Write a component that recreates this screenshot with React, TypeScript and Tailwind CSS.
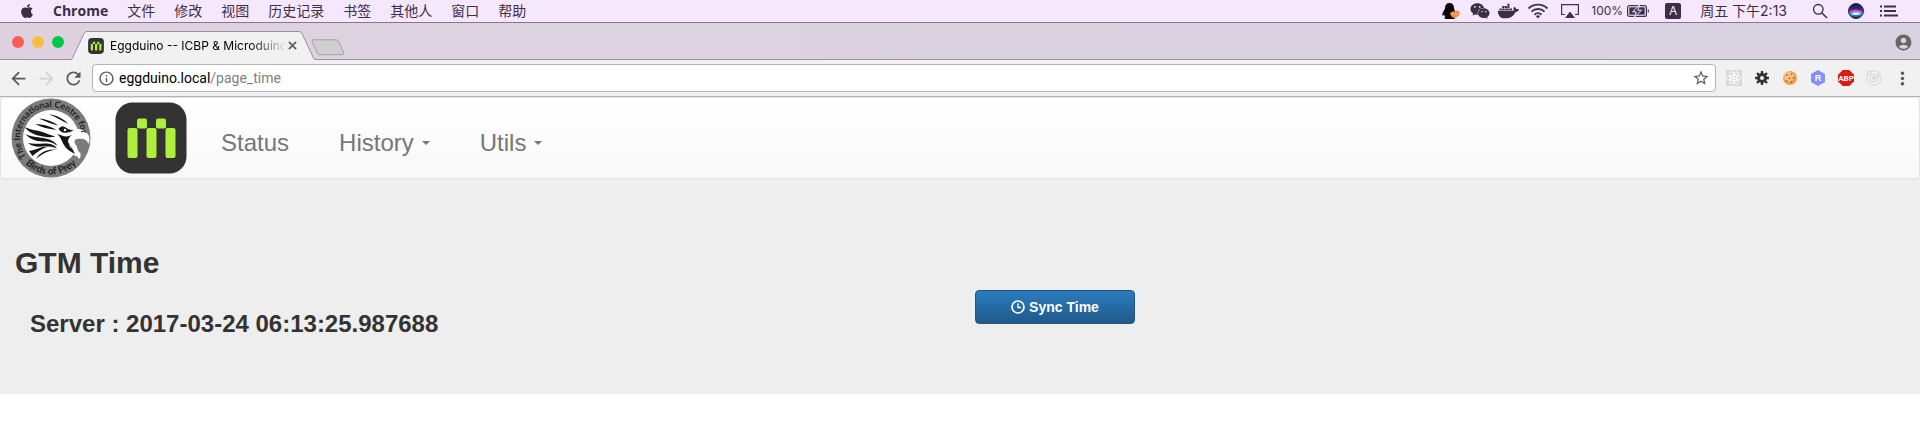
import React from "react";
import { FaApple, FaCog, FaDocker, FaWeixin } from "react-icons/fa";
import { MdArrowBack, MdArrowForward, MdRefresh, MdStarBorder, MdAccountCircle, MdMoreVert, MdInfoOutline } from "react-icons/md";

const MENUS = ["文件", "修改", "视图", "历史记录", "书签", "其他人", "窗口", "帮助"];

function Penguin() {
  return (
    <svg viewBox="0 0 18 18" className="h-[18px] w-[18px]" aria-hidden="true">
      <path d="M7.500 1C4.600 1 3 3 3 6c-.2 1.500-1.500 3-2.500 5.300-.4 1.300-.2 2.400.2 2.400.5 0 1-.7 1.300-1.100.2 1 .7 1.800 1.300 2.400C2.200 15.500 2 17 4 17h7.500c2 0 1.500-1.600.4-2.100 1-1 1.500-2.300 1.400-3.900C13.200 9 12.200 7.500 12 6c0-3-1.500-5-4.500-5z" fill="#0a0708" />
      <path d="M8.500 10.500c2-1.500 3.500-.5 5-1.200 2-.9 3.500-.3 4 .7.500 1.400-.2 3-1.500 4.300-2 2-5 1.900-6.500.2-1-1.100-1.700-3-1-4z" fill="#f28a3c" />
      <path d="M10 11.500c2 1.400 4.500 1 6.500-.8" stroke="#ffc380" strokeWidth="1" fill="none" />
    </svg>
  );
}

function Wifi() {
  return (
    <svg viewBox="0 0 22 16" className="h-4 w-[22px]" fill="none" stroke="#42324f" strokeWidth="1.900" aria-hidden="true">
      <path d="M1.500 5.500a13.500 13.500 0 0 1 19 0M4.500 8.700a9.200 9.200 0 0 1 13 0M7.500 11.700a5 5 0 0 1 7 0" />
      <path d="M11 15.500 8.900 13.300a3 3 0 0 1 4.200 0z" fill="#42324f" stroke="none" />
    </svg>
  );
}

function AirPlay() {
  return (
    <svg viewBox="0 0 18 14" className="h-3.5 w-[18px]" aria-hidden="true">
      <path d="M4 10.500H.6V.6h16.800v9.900H14" fill="none" stroke="#42324f" strokeWidth="1.200" />
      <path d="M9 7.500 14 14H4z" fill="#42324f" />
    </svg>
  );
}

function Battery() {
  return (
    <svg viewBox="0 0 23 12" className="h-3 w-[23px]" aria-hidden="true">
      <rect x=".6" y=".6" width="18.800" height="10.800" rx="2" fill="none" stroke="#42324f" strokeWidth="1.200" />
      <rect x="2.300" y="2.300" width="15.400" height="7.400" fill="#42324f" />
      <path d="M20.800 4v4c1.400-.3 1.700-3.500 0-4z" fill="#42324f" />
      <path d="M12.500 0 5.500 6.800h3.700L7.500 12l7-6.800h-3.700z" fill="#42324f" stroke="#f7e9fd" strokeWidth="1" />
    </svg>
  );
}

function Siri() {
  return (
    <svg viewBox="0 0 16 16" className="h-4 w-4" aria-hidden="true">
      <defs>
        <linearGradient id="siri" x1="0" y1="0" x2="0" y2="1">
          <stop offset="0" stopColor="#17152f" />
          <stop offset=".45" stopColor="#4a2a9a" />
          <stop offset=".7" stopColor="#3aa7f0" />
          <stop offset="1" stopColor="#151937" />
        </linearGradient>
      </defs>
      <circle cx="8" cy="8" r="7.500" fill="url(#siri)" stroke="#2a2547" />
      <path d="M1.500 8.500C5 6 10 6.500 14.500 8.500 11 9.500 7 10.500 1.500 8.500z" fill="#e04bd0" />
      <path d="M3 10.500c3-1.800 6-1.500 10-.8-2 2.300-6 3.500-10 .8z" fill="#c9f6ff" />
    </svg>
  );
}

function Microduino({ className }: { className: string }) {
  return (
    <svg viewBox="0 0 72 72" className={className} role="img" aria-label="Microduino">
      <rect x=".5" y=".5" width="71" height="71" rx="17" fill="#333" />
      <g fill="#aeef3c">
        <rect x="12.500" y="26" width="10" height="30" rx="2" />
        <rect x="31.500" y="26" width="10" height="30" rx="2" />
        <rect x="50.500" y="26" width="10" height="30" rx="2" />
        <rect x="22" y="16.500" width="10" height="10" rx="2" />
        <rect x="41" y="16.500" width="10" height="10" rx="2" />
      </g>
    </svg>
  );
}

function BirdsOfPrey() {
  return (
    <svg viewBox="0 0 80 80" className="h-20 w-20" role="img" aria-label="The International Centre for Birds of Prey">
      <defs>
        <path id="ringTop" d="M15.400 58.500A30.800 30.800 0 1 1 70.800 40" />
        <path id="ringBottom" d="M8 57.600A36.500 36.500 0 0 0 72 57.600" />
      </defs>
      <circle cx="40" cy="40" r="39.500" fill="#7b7b7b" />
      <circle cx="40" cy="40" r="28" fill="#fff" />
      <path d="M63 40h6c0 9-2 15-6 19l-6-8z" fill="#7b7b7b" />
      <path d="M57 28c3-.6 6 1 9 3 6-.8 10 3 12 7 .8 3 .5 6-.6 8-1-3-3-5-6-5-5-1-8 0-8 3 1 3 3 4 3 7 1 3 2 3 3 4 .5 3 0 5-1.500 6-1-3-4-4-7-4-4-1-7-5-9-9l-3-10z" fill="#fff" />
      <g fill="#151515">
        <path d="M38 16.500c8 .5 14 4 19.500 9.500-7-3.500-12-7-19.500-9.500z" />
        <path d="M28 20.500c7 .5 14 3 19 7-6-1.500-12-3.500-19-7z" />
        <path d="M24 26c8 0 15 2 22 6-7-1-14-2-22-6z" />
        <path d="M13.500 29c6 3 12 3 18 5 5 1.500 8 3.500 13 4.500-5 1.500-11 .5-15-.5-7-1.500-12-4-16-9z" />
        <path d="M14.500 36c7 3.500 14 3 20 4.500 6 1 10 3.500 12 7.500-5-4-9-4.500-15-4.500-7-.3-13-2.500-17-7.500z" />
        <path d="M17 45c7 1.500 13 0 19 .5 5 .3 8 2 10 5-5-2-9-2.500-14-2-6 .5-11 0-15-3.500z" />
        <path d="M18 53c7-1 12-5 20-4.500-8 2-12 6-16.500 9.500z" />
        <path d="M25 61c4-7 11-10 21-9.500-9 1-14 4-21 9.500z" />
        <path d="M47.500 30.500c3-3 6-2.500 8-.5 2 1.500 4 2 7 2-2 1.500-4 2.500-6 2.500-4 1-7 0-9-4z" />
        <path d="M46 36c4 1 7 3 10 2.500l5-1.500c-3 2-4 4-4 7 2 4 5 7 7 12-5-3-9-5-11-9-2-3-3-8-7-11z" />
      </g>
      <circle cx="54" cy="32" r="1.300" fill="#fff" />
      <path d="M58 45c1 2 3 3 4 6-3-1-4-3-4-6zM70 35.500c2 0 3 .5 4 1.500" fill="#ccc" />
      <g fill="#222" className="font-[Lato,sans-serif] font-bold">
        <text className="text-[9px]"><textPath href="#ringTop">The International Centre for</textPath></text>
        <text className="text-[10px]"><textPath href="#ringBottom" startOffset="50%" textAnchor="middle">Birds of Prey</textPath></text>
      </g>
    </svg>
  );
}

function MenuBar() {
  return (
    <header className="flex h-[23px] items-center justify-between border-b border-[#8a7396] bg-[#f6e8fc] pr-[22px] pl-[20px] font-[Inter,'Noto_Sans_CJK_SC',sans-serif] text-sm text-[#3c2e46]">
      <nav className="flex items-center gap-[19px]">
        <FaApple className="h-4 w-3.5" />
        <span className="font-['Open_Sans'] font-bold">Chrome</span>
        {MENUS.map((m) => <span key={m}>{m}</span>)}
      </nav>
      <div className="flex items-center">
        <Penguin />
        <FaWeixin className="ml-2.5 h-5 w-5" />
        <FaDocker className="ml-2 h-5 w-[21px]" />
        <span className="ml-2"><Wifi /></span>
        <span className="ml-3"><AirPlay /></span>
        <span className="ml-3 text-xs">100%</span>
        <span className="ml-1"><Battery /></span>
        <span className="ml-[15px] flex h-4 w-4 items-center justify-center rounded-xs bg-[#3c2e46] text-xs text-[#f6e8fc]">A</span>
        <span className="ml-[19px]">周五 下午2:13</span>
        <svg viewBox="0 0 16 16" className="ml-[25px] h-4 w-4" fill="none" stroke="currentColor" strokeWidth="1.300" aria-hidden="true">
          <circle cx="6.300" cy="6.300" r="4.800" />
          <path d="m10 10 5 5" strokeWidth="1.600" />
        </svg>
        <span className="ml-5"><Siri /></span>
        <svg viewBox="0 0 18 12" className="ml-4 h-3 w-[18px]" stroke="currentColor" strokeWidth="1.800" aria-hidden="true">
          <path d="M0 1.500h2M4 1.500h12M0 6h2M4 6h12M0 10.500h2M4 10.500h14" />
        </svg>
      </div>
    </header>
  );
}

function TabStrip() {
  return (
    <div className="flex h-[37px] items-end bg-linear-to-r from-[#dfd2e0] to-[#d8d3e1] shadow-[inset_0_-1px_#9b8fa3]">
      <div className="mb-3 ml-3 flex gap-2">
        <span className="h-3 w-3 rounded-full bg-[#fc5b57]" />
        <span className="h-3 w-3 rounded-full bg-[#fdbc40]" />
        <span className="h-3 w-3 rounded-full bg-[#02c84a]" />
      </div>
      <div className="relative ml-[7px] h-[29px] w-[244px]">
        <svg viewBox="0 0 244 29" className="absolute inset-0 h-full w-full" aria-hidden="true">
          <path d="M0 28.500 1 28 13 2.500Q14 .5 16 .5H228Q230 .5 231 2.500L243 28l1 .5V29H0z" fill="#f1f1f1" />
          <path d="M0 28.500 1 28 13 2.500Q14 .5 16 .5H228Q230 .5 231 2.500L243 28l1 .5" fill="none" stroke="#9b8fa3" />
        </svg>
        <div className="relative flex h-full items-center pl-[17px]">
          <Microduino className="h-4 w-4" />
          <span className="ml-1.5 w-[174px] overflow-hidden bg-linear-to-r from-black from-80% to-black/10 bg-clip-text font-[Inter] text-xs whitespace-nowrap text-transparent">Eggduino -- ICBP &amp; Microduino</span>
          <button aria-label="Close tab" className="ml-1 text-[#5a5a5a]">
            <svg viewBox="0 0 10 10" className="h-[9px] w-[9px]" stroke="currentColor" strokeWidth="1.800"><path d="m1 1 8 8M9 1 1 9" /></svg>
          </button>
        </div>
      </div>
      <button aria-label="New tab" className="-ml-1 mb-1">
        <svg viewBox="0 0 34 17" className="h-[17px] w-[34px]"><path d="M2 .8h23q2 0 2.800 1.700l4.800 11.500q.6 1.700-1.400 1.700H9q-2 0-2.800-1.700L1 2.500Q.5.800 2 .8z" fill="#cfcfcf" stroke="#a59eaa" /></svg>
      </button>
      <button aria-label="Profile" className="mr-[7px] mb-2 ml-auto text-[#666]"><MdAccountCircle className="h-[19px] w-[19px]" /></button>
    </div>
  );
}

function Toolbar() {
  return (
    <div className="flex h-[37px] items-center border-b border-[#b4b2b6] bg-[#f1f1f1] pr-[7px] pl-2 text-[#5a5a5a]">
      <button aria-label="Back"><MdArrowBack className="h-[21px] w-[21px]" /></button>
      <button aria-label="Forward" className="ml-[7px] text-[#d2d2d2]"><MdArrowForward className="h-[21px] w-[21px]" /></button>
      <button aria-label="Reload" className="ml-1.5"><MdRefresh className="h-[21px] w-[21px]" /></button>
      <div className="ml-2 flex h-7 flex-1 items-center rounded-sm border border-[#b4b4b8] bg-white pr-[5px] pl-[5px]">
        <MdInfoOutline className="h-[17px] w-[17px]" />
        <span className="ml-1 flex-1 font-[Roboto] text-sm text-[#808080]"><span className="text-black">eggduino.local</span>/page_time</span>
        <button aria-label="Bookmark"><MdStarBorder className="h-[18px] w-[18px]" /></button>
      </div>
      <div className="ml-2.5 flex items-center gap-3">
        <svg viewBox="0 0 16 16" className="h-4 w-4" fill="none" stroke="#fff" strokeWidth=".9" aria-hidden="true">
          <rect width="16" height="16" fill="#d8d8d8" stroke="none" />
          <ellipse cx="8" cy="8" rx="7" ry="2.700" />
          <ellipse cx="8" cy="8" rx="7" ry="2.700" transform="rotate(60 8 8)" />
          <ellipse cx="8" cy="8" rx="7" ry="2.700" transform="rotate(120 8 8)" />
          <circle cx="8" cy="8" r="1" fill="#fff" />
        </svg>
        <svg viewBox="0 0 16 16" className="h-4 w-4" aria-hidden="true">
          <g stroke="#333" strokeWidth="2.400"><path d="M8 1v14M1 8h14M3 3l10 10M13 3 3 13" /></g>
          <circle cx="8" cy="8" r="5" fill="#333" /><circle cx="8" cy="8" r="2" fill="#f1f1f1" />
        </svg>
        <svg viewBox="0 0 16 16" className="h-4 w-4" aria-hidden="true">
          <circle cx="8" cy="8" r="7" fill="#e9a254" /><circle cx="7" cy="6.500" r="5" fill="#f5bf78" />
          <g fill="#8a4a1c"><circle cx="5" cy="5" r=".8" /><circle cx="9.500" cy="4" r=".7" /><circle cx="11.500" cy="8" r=".8" /><circle cx="7.500" cy="8.500" r=".8" /><circle cx="4.500" cy="11" r=".7" /><circle cx="9.500" cy="12" r=".8" /></g>
        </svg>
        <svg viewBox="0 0 16 16" className="h-4 w-4" aria-hidden="true">
          <path d="M8 0 15 4v8l-7 4-7-4V4z" fill="#8390f5" /><text x="8" y="11" textAnchor="middle" fill="#fff" className="font-['Liberation_Sans'] text-[9px] font-bold">R</text>
        </svg>
        <svg viewBox="0 0 16 16" className="h-4 w-4" aria-hidden="true">
          <path d="M4.700 0h6.600L16 4.700v6.600L11.300 16H4.700L0 11.300V4.700z" fill="#dc1a12" /><text x="8" y="11" textAnchor="middle" fill="#fff" className="font-[Roboto] text-[8px] font-bold">ABP</text>
        </svg>
        <svg viewBox="0 0 16 16" className="h-4 w-4" fill="none" stroke="#d6d6d6" aria-hidden="true">
          <circle cx="8" cy="8" r="7.300" /><circle cx="8" cy="8" r="4" /><circle cx="8" cy="8" r="2" fill="#d6d6d6" stroke="none" /><circle cx="3" cy="3" r="1.700" fill="#f1f1f1" /><circle cx="13" cy="5" r="1.200" fill="#f1f1f1" />
        </svg>
      </div>
      <button aria-label="Menu" className="ml-2.5"><MdMoreVert className="h-[21px] w-[21px]" /></button>
    </div>
  );
}

function Caret() {
  return <span className="ml-2 h-0 w-0 border-x-4 border-t-4 border-x-transparent border-t-[#777]" />;
}

export default function App() {
  return (
    <div className="min-h-screen bg-white font-['Liberation_Sans',sans-serif]">
      <MenuBar />
      <TabStrip />
      <Toolbar />
      <div className="bg-[#eee]">
        <nav className="flex rounded-sm border border-[#e3e3e3] bg-linear-to-b from-white to-[#f8f8f8] pl-2.5 text-2xl text-[#777]">
          <a href="#home"><BirdsOfPrey /></a>
          <a href="#microduino" className="mt-1 ml-6"><Microduino className="h-[72px] w-[72px]" /></a>
          <div className="ml-[34px] flex items-center gap-[50px] pt-2.5">
            <a href="#status">Status</a>
            <button className="flex items-center">History<Caret /></button>
            <button className="flex items-center">Utils<Caret /></button>
          </div>
        </nav>
        <main className="grid grid-cols-2 px-[15px] pt-[66px] pb-[52px] text-[#333]">
          <section>
            <h2 className="text-3xl leading-9 font-bold">GTM Time</h2>
            <h3 className="mt-[25px] ml-[15px] text-2xl leading-9 font-bold">Server : 2017-03-24 06:13:25.987688</h3>
          </section>
          <div className="pt-[45px] pl-[15px]">
            <button className="flex h-[34px] w-40 items-center justify-center gap-1 rounded-sm border border-[#245580] bg-linear-to-b from-[#2b7cbd] to-[#1f5a8b] text-sm font-bold text-white">
              <svg viewBox="0 0 14 14" className="h-3.5 w-3.5" fill="none" stroke="currentColor" strokeWidth="1.700" aria-hidden="true"><circle cx="7" cy="7" r="6" /><path d="M7 3.500V7.500h3" strokeWidth="1.300" /></svg>
              Sync Time
            </button>
          </div>
        </main>
      </div>
    </div>
  );
}
